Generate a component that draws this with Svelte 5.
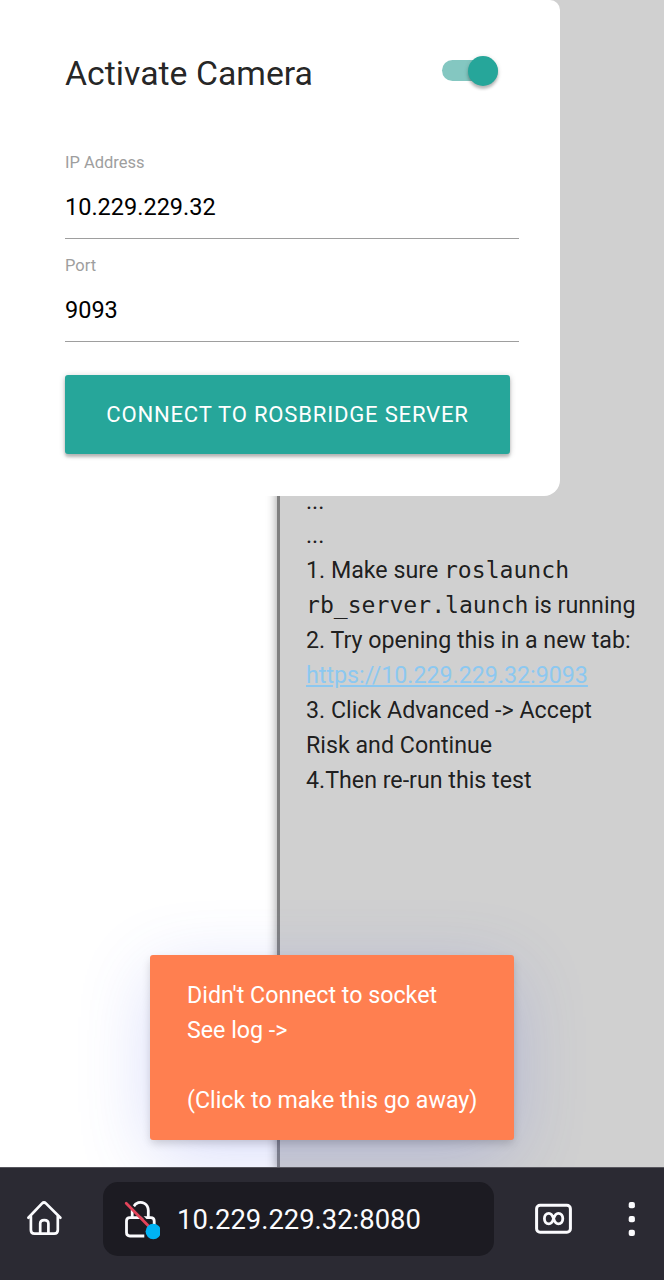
<script>
  let cameraOn = $state(true);
  let ip = $state('10.229.229.32');
  let port = $state('9093');
  let toastShown = $state(true);
</script>

<div class="screen">
  <main>
    <aside class="log">
      <div>...</div>
      <div>...</div>
      <div>1. Make sure <code>roslaunch</code></div>
      <div><code>rb_server.launch</code> is running</div>
      <div>2. Try opening this in a new tab:</div>
      <div><a href="https://10.229.229.32:9093">https://10.229.229.32:9093</a></div>
      <div>3. Click Advanced -&gt; Accept</div>
      <div>Risk and Continue</div>
      <div>4.Then re-run this test</div>
    </aside>

    <section class="card">
      <div class="heading">
        <h1>Activate Camera</h1>
        <button class="switch" class:on={cameraOn} aria-label="Camera" onclick={() => (cameraOn = !cameraOn)}>
          <span class="knob"></span>
        </button>
      </div>
      <label class="field"><span>IP Address</span><input bind:value={ip} /></label>
      <label class="field"><span>Port</span><input bind:value={port} /></label>
      <button class="connect">CONNECT TO ROSBRIDGE SERVER</button>
    </section>

    {#if toastShown}
      <button class="toast" onclick={() => (toastShown = false)}>
        <span>Didn't Connect to socket</span>
        <span>See log -&gt;</span>
        <span>&nbsp;</span>
        <span>(Click to make this go away)</span>
      </button>
    {/if}
  </main>

  <nav>
    <svg class="home" width="40" height="40" viewBox="0 0 40 40" fill="none" stroke="#fbfbfe" stroke-width="2.7" stroke-linecap="round" stroke-linejoin="round">
      <path d="M4.4 18.7 18.1 4.4Q20 2.5 21.9 4.4L36.4 18.7" />
      <path d="M6.9 17.5V31Q6.9 34.6 10.5 34.6H30.2Q33.8 34.6 33.8 31V17.5" />
      <path d="M16.2 34.2V24.6Q16.2 21.2 20.3 21.2Q24.4 21.2 24.4 24.6V34.2" />
    </svg>
    <div class="address">
      <svg width="40" height="42" viewBox="0 0 40 42" fill="none">
        <path d="M13.6 8.6C15.6 4.4 20.6 3.2 24.4 5.4Q28.3 7.8 28.3 12.6V19.8M12.2 12V19.8" stroke="#fbfbfe" stroke-width="2.8" />
        <path d="M24.3 38H9.9Q6.5 38 6.5 34.6V23.1Q6.5 19.7 9.9 19.7H30.8Q34.2 19.7 34.2 23.1V28" stroke="#fbfbfe" stroke-width="2.8" />
        <path d="M8.2 4 33 29" stroke="#1c1b22" stroke-width="2" />
        <path d="M6.2 5.2 31 30.5" stroke="#e3445a" stroke-width="2.8" stroke-linecap="round" />
        <circle cx="33.3" cy="33.5" r="7.7" fill="#00b3f4" />
      </svg>
      <span>10.229.229.32:8080</span>
    </div>
    <svg class="tabs" width="38" height="32" viewBox="0 0 38 32" fill="none" stroke="#fbfbfe">
      <rect x="2.6" y="2.2" width="33.8" height="27" rx="3.5" stroke-width="3" />
      <path d="M19.6 15.6C18.4 12 17.2 10.3 14.9 10.3C12 10.3 10.4 12.6 10.4 15.6C10.4 18.6 12 20.9 14.9 20.9C17.2 20.9 18.4 19.2 19.6 15.6C20.8 12 22 10.3 24.3 10.3C27.2 10.3 28.8 12.6 28.8 15.6C28.8 18.6 27.2 20.9 24.3 20.9C22 20.9 20.8 19.2 19.6 15.6Z" stroke-width="2.8" />
    </svg>
    <svg class="menu" width="10" height="38" viewBox="0 0 10 38" fill="#fbfbfe">
      <rect x="2.7" y="2.1" width="6.2" height="6.2" rx="2" />
      <rect x="2.7" y="16" width="6.2" height="6.2" rx="2" />
      <rect x="2.7" y="29.8" width="6.2" height="6.2" rx="2" />
    </svg>
  </nav>
</div>

<style>
  .screen {
    width: 664px;
    height: 1280px;
    display: flex;
    flex-direction: column;
    overflow: hidden;
    background: #fff;
    font-family: Roboto, sans-serif;
    font-size: 23.23px;
    line-height: 34.8px;
    color: rgba(0, 0, 0, 0.87);
  }
  button, input {
    font: inherit;
    border: 0;
    padding: 0;
    margin: 0;
    box-sizing: border-box;
  }
  main {
    position: relative;
    flex: 1;
    display: flex;
    justify-content: flex-end;
    overflow: hidden;
  }
  .log {
    box-sizing: border-box;
    width: 387px;
    padding: 483.5px 0 0 26px;
    border-left: 3px solid #808080;
    background: #d0d0d0;
    box-shadow: 0 3px 10px rgba(0, 0, 0, 0.4);
    line-height: 34.9px;
    white-space: nowrap;
  }
  code {
    font-family: "DejaVu Sans Mono", monospace;
    font-size: 23.1px;
    line-height: 1;
  }
  a {
    color: #8cc8f0;
    text-decoration: underline;
  }
  .card {
    position: absolute;
    top: 0;
    left: 0;
    box-sizing: border-box;
    width: 560px;
    height: 496px;
    padding: 46px 41px 0 65px;
    background: #fff;
    border-radius: 0 10px 16px 0;
  }
  .heading {
    display: flex;
    align-items: center;
    height: 56px;
    margin-bottom: 46px;
  }
  h1 {
    flex: 1;
    margin: 0;
    font-size: 33.8px;
    font-weight: 400;
  }
  .switch {
    display: flex;
    align-items: center;
    width: 56px;
    height: 21px;
    margin: 0 21px 7px 0;
    border-radius: 11px;
    background: rgba(0, 0, 0, 0.38);
  }
  .switch.on {
    justify-content: flex-end;
    background: #84c7c1;
  }
  .knob {
    width: 30px;
    height: 30px;
    border-radius: 50%;
    background: #26a69a;
    box-shadow: 0 3px 3px rgba(0, 0, 0, 0.22), 0 1px 5px rgba(0, 0, 0, 0.14);
  }
  .field {
    display: flex;
    flex-direction: column;
    width: 454px;
    height: 103.4px;
  }
  .field span {
    height: 29px;
    font-size: 16.5px;
    line-height: 29px;
    color: #9e9e9e;
  }
  .field input {
    height: 62px;
    padding-bottom: 2px;
    font-size: 23.5px;
    border-bottom: 1px solid #9e9e9e;
    outline: none;
    background: transparent;
    color: #000;
  }
  .connect {
    display: block;
    width: 445px;
    height: 79px;
    margin-top: 20px;
    border-radius: 3px;
    background: #26a69a;
    color: #fff;
    font-size: 22.1px;
    letter-spacing: 0.78px;
    white-space: nowrap;
    box-shadow: 0 3px 3px rgba(0, 0, 0, 0.2), 0 1px 6px rgba(0, 0, 0, 0.2);
  }
  .toast {
    position: absolute;
    left: 150px;
    top: 955px;
    display: flex;
    flex-direction: column;
    width: 364px;
    height: 185px;
    padding: 23px 37px;
    border-radius: 3px;
    background: #ff7f50;
    color: #fff;
    text-align: left;
    white-space: nowrap;
    box-shadow: 0 4px 10px -1px rgba(0, 0, 0, 0.18), 0 17px 74px -3px rgba(77, 96, 232, 0.23);
  }
  .toast span:last-child { margin-top: 0.5px; }
  nav {
    position: relative;
    box-sizing: border-box;
    height: 113px;
    display: flex;
    align-items: flex-start;
    padding: 15px 27px 0 24px;
    border-top: 1px solid #57565e;
    background: #2b2a33;
  }
  .home { margin-top: 16px; }
  .address {
    box-sizing: border-box;
    width: 391px;
    height: 74px;
    margin-left: 39px;
    margin-top: -1px;
    padding-left: 17px;
    display: flex;
    align-items: center;
    gap: 17px;
    border-radius: 15px;
    background: #1c1b22;
    color: #fbfbfe;
    font-size: 27.4px;
  }
  .address span { padding-top: 3px; }
  .tabs { margin: 20px 0 0 40px; }
  .menu { margin: 17px 0 0 54px; }
</style>
